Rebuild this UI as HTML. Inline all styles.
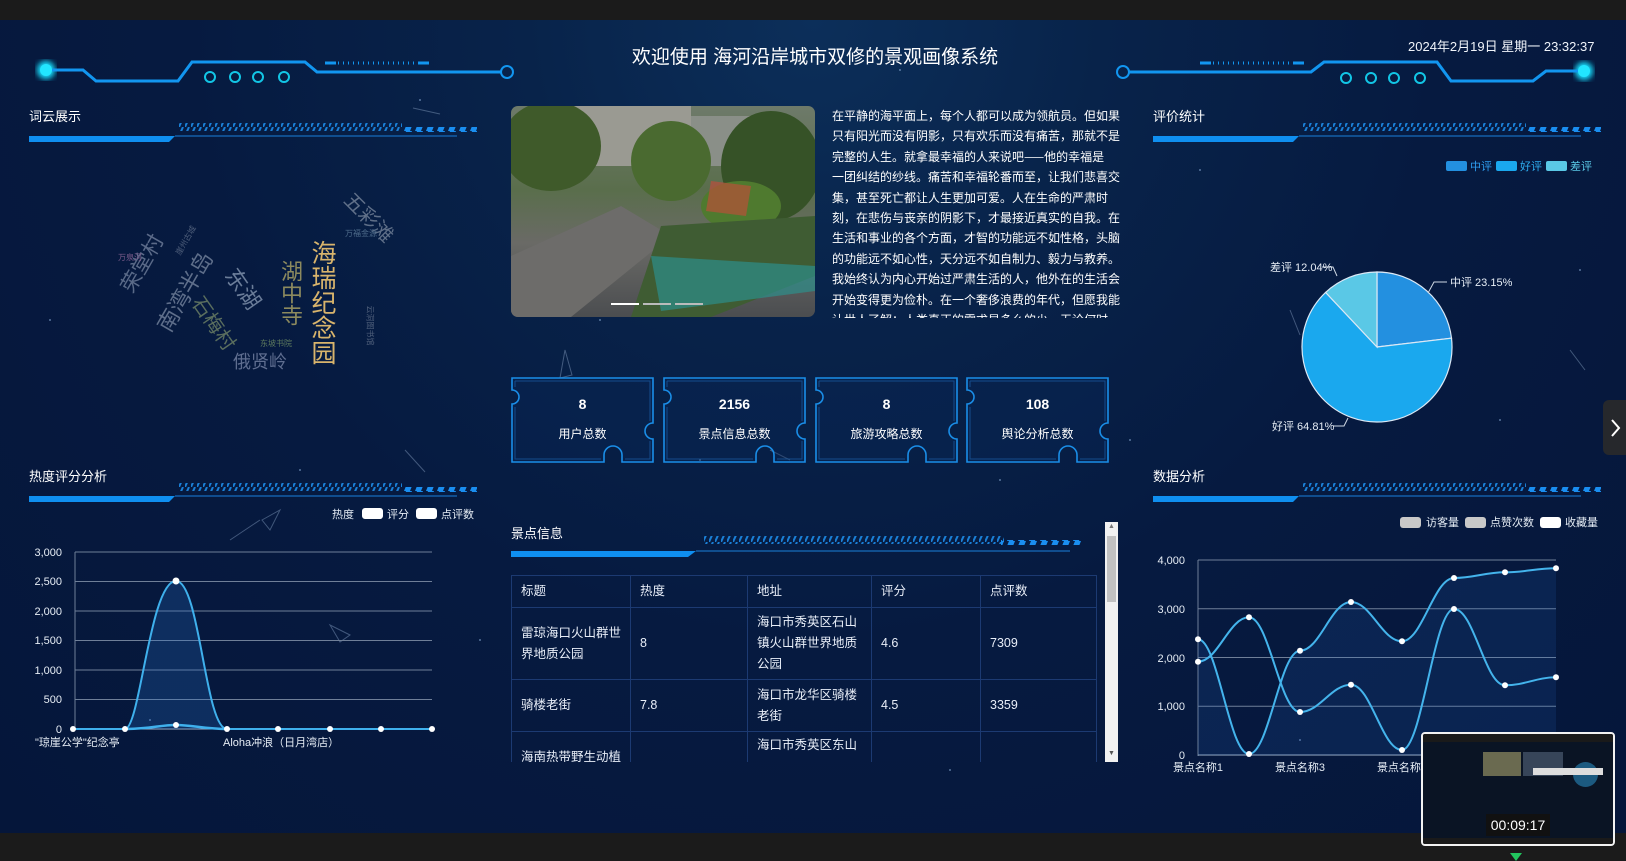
<!DOCTYPE html>
<html><head><meta charset="utf-8">
<style>
*{margin:0;padding:0;box-sizing:border-box}
body{width:1626px;height:861px;overflow:hidden;background:#1b1b1b;font-family:"Liberation Sans","Noto Sans CJK SC",sans-serif;color:#fff;position:relative}
#main{position:absolute;left:0;top:20px;width:1626px;height:813px;background:radial-gradient(ellipse at 50% 0%,#0c2f5a 0%,#08234a 25%,#061a40 55%,#05163a 100%);overflow:hidden}
.abs{position:absolute}
.t{position:absolute;white-space:nowrap}
.wc{position:absolute;white-space:nowrap;font-family:"Noto Sans CJK SC",sans-serif}
table{border-collapse:collapse;font-size:12.5px;font-family:"Liberation Sans","Noto Sans CJK SC",sans-serif}
td{border:1px solid #1c3a72;padding:0 9px;vertical-align:middle;line-height:21px;color:#e8eef8}
</style></head><body>
<div id="main">
<svg class="abs" style="left:0;top:0" width="1626" height="813">
<g fill="#8fb0d8" opacity=".6">
<circle cx="420" cy="80" r="1"/><circle cx="900" cy="50" r="1"/><circle cx="600" cy="300" r="1"/><circle cx="1200" cy="150" r="1"/><circle cx="1500" cy="400" r="1"/><circle cx="300" cy="450" r="1"/><circle cx="700" cy="440" r="1"/><circle cx="1000" cy="460" r="1"/><circle cx="150" cy="700" r="1"/><circle cx="950" cy="750" r="1"/><circle cx="1300" cy="720" r="1"/><circle cx="50" cy="300" r="1"/><circle cx="1580" cy="250" r="1"/><circle cx="480" cy="620" r="1"/><circle cx="1130" cy="420" r="1"/>
</g>
<g stroke="#7d95b8" stroke-width="1" opacity=".5" fill="none">
<path d="M413 88 L440 94"/><path d="M565 330 L572 355 L560 358Z"/><path d="M262 500 L280 490 L270 510Z"/><path d="M330 605 L350 615 L340 622Z"/><path d="M1570 330 L1585 350"/><path d="M1290 290 L1300 315"/><path d="M230 520 L260 500"/><path d="M405 430 L425 452"/><path d="M770 430 L790 440"/>
</g>
</svg>

<svg class="abs" style="left:0;top:0" width="1626" height="120">
<defs><filter id="gl"><feGaussianBlur stdDeviation="3"/></filter></defs>
<circle cx="46" cy="50" r="9" fill="#19e0ff" filter="url(#gl)"/>
<circle cx="46" cy="50" r="6" fill="#22e6ff"/>
<path d="M52 50 H83 L96 61 H178 L192 42 H305 L317 52 H501" stroke="#1296f0" stroke-width="3" fill="none"/>
<circle cx="507" cy="52" r="6" stroke="#1296f0" stroke-width="2" fill="none"/>
<g stroke="#12c6e6" stroke-width="2" fill="none"><circle cx="210" cy="57" r="5"/><circle cx="235" cy="57" r="5"/><circle cx="258" cy="57" r="5"/><circle cx="284" cy="57" r="5"/></g>
<path d="M325 43 H336 M418 43 H429" stroke="#1296f0" stroke-width="3"/>
<path d="M338 43 H416" stroke="#1296f0" stroke-width="3" stroke-dasharray="1 4"/>

<circle cx="1584" cy="51" r="9" fill="#19e0ff" filter="url(#gl)"/>
<circle cx="1584" cy="51" r="6" fill="#22e6ff"/>
<path d="M1578 51 H1546 L1533 61 H1451 L1437 42 H1324 L1311 52 H1129" stroke="#1296f0" stroke-width="3" fill="none"/>
<circle cx="1123" cy="52" r="6" stroke="#1296f0" stroke-width="2" fill="none"/>
<g stroke="#12c6e6" stroke-width="2" fill="none"><circle cx="1346" cy="58" r="5"/><circle cx="1371" cy="58" r="5"/><circle cx="1394" cy="58" r="5"/><circle cx="1420" cy="58" r="5"/></g>
<path d="M1200 43 H1211 M1293 43 H1304" stroke="#1296f0" stroke-width="3"/>
<path d="M1213 43 H1291" stroke="#1296f0" stroke-width="3" stroke-dasharray="1 4"/>
</svg>
<div class="t" style="left:0;width:1630px;text-align:center;top:22px;font-size:19px;">欢迎使用 海河沿岸城市双修的景观画像系统</div>
<div class="t" style="left:1408px;top:16px;font-size:13px;color:#f0f4fa">2024年2月19日 星期一 23:32:37</div>

<svg class="abs" style="left:0;top:0" width="1626" height="813">
<defs>
<pattern id="hatch" width="6" height="9" patternUnits="userSpaceOnUse"><path d="M0 9 L4 0" stroke="#1a7fd6" stroke-width="2"/></pattern>
<pattern id="dsh" width="11" height="5" patternUnits="userSpaceOnUse"><path d="M1 5 L3 0 H9 L7 5Z" fill="#1a8ef0"/></pattern>
<g id="ph">
<path d="M0 0 H146 L140 6 H0Z" fill="#0f8ff0"/>
<path d="M146 0 H428" stroke="#135ea8" stroke-width="1.5"/>
<rect x="150" y="-13" width="223" height="8" fill="url(#hatch)"/>
<rect x="373" y="-9" width="75" height="5" fill="url(#dsh)"/>
</g>
</defs>
<use href="#ph" x="29" y="116"/>
<use href="#ph" x="1153" y="116"/>
<use href="#ph" x="29" y="476"/>
<use href="#ph" x="1153" y="476"/>
<g transform="translate(511,531)">
<path d="M0 0 H185 L177 6 H0Z" fill="#0f8ff0"/>
<path d="M185 0 H559" stroke="#135ea8" stroke-width="1.5"/>
<rect x="193" y="-15" width="300" height="8" fill="url(#hatch)"/>
<rect x="490" y="-11" width="80" height="5" fill="url(#dsh)"/>
</g>
</svg>
<div class="t" style="left:29px;top:86px;font-size:13px">词云展示</div>
<div class="t" style="left:1153px;top:86px;font-size:13px">评价统计</div>
<div class="t" style="left:29px;top:446px;font-size:13px">热度评分分析</div>
<div class="t" style="left:1153px;top:446px;font-size:13px">数据分析</div>
<div class="t" style="left:511px;top:503px;font-size:13px">景点信息</div>

<div class="wc" style="left:311px;top:220px;writing-mode:vertical-rl;font-size:25px;color:#d8b46c;line-height:26px">海瑞纪念园</div>
<div class="wc" style="left:280px;top:240px;writing-mode:vertical-rl;font-size:22px;color:#8c8a5e;line-height:23px">湖中寺</div>
<div class="wc" style="left:340px;top:182px;font-size:20px;color:#5f6f88;transform:rotate(45deg)">五彩滩</div>
<div class="wc" style="left:222px;top:252px;font-size:22px;color:#6b7d99;transform:rotate(55deg)">东湖</div>
<div class="wc" style="left:185px;top:288px;font-size:20px;color:#5a6e5e;transform:rotate(55deg)">石梅村</div>
<div class="wc" style="left:140px;top:255px;font-size:22px;color:#5e6e8a;transform:rotate(-60deg)">南湾半岛</div>
<div class="wc" style="left:110px;top:228px;font-size:21px;color:#5a6a88;transform:rotate(-60deg)">荣堂村</div>
<div class="wc" style="left:233px;top:328px;font-size:18px;color:#5f6e90">俄贤岭</div>
<div class="wc" style="left:345px;top:208px;font-size:8px;color:#4e6b8a">万福金源</div>
<div class="wc" style="left:260px;top:318px;font-size:8px;color:#5d7a5d">东坡书院</div>
<div class="wc" style="left:118px;top:232px;font-size:8px;color:#7a5a8a">万泉河</div>
<div class="wc" style="left:170px;top:215px;font-size:8px;color:#4e5e7a;transform:rotate(-60deg)">崖州古城</div>
<div class="wc" style="left:350px;top:300px;font-size:8px;color:#4e5e7a;transform:rotate(90deg)">云洞图书馆</div>

<div class="abs" style="left:511px;top:86px;width:304px;height:211px;border-radius:7px;overflow:hidden;background:linear-gradient(180deg,#6e7a6a 0%,#5a6e4c 40%,#6a6a66 65%,#4b4d50 100%)">
<svg width="304" height="211">
<rect x="60" y="0" width="120" height="60" fill="#9a9a92"/>
<rect x="180" y="10" width="80" height="50" fill="#8a8f88"/>
<ellipse cx="40" cy="40" rx="50" ry="45" fill="#3f5a2a"/>
<ellipse cx="160" cy="55" rx="40" ry="40" fill="#4a6a30"/>
<ellipse cx="260" cy="60" rx="50" ry="55" fill="#365227"/>
<ellipse cx="230" cy="100" rx="40" ry="25" fill="#4f7a2f"/>
<path d="M0 150 L110 100 L160 130 L60 211 H0Z" fill="#6d6c6a"/>
<path d="M150 120 L304 110 V170 L200 211 H120Z" fill="#3f5c33"/>
<path d="M140 150 L304 160 V185 L150 205Z" fill="#2e8f8a" opacity=".7"/>
<path d="M200 75 L240 80 L235 110 L195 105Z" fill="#c94a3a" opacity=".6"/>
<rect x="100" y="197" width="28" height="2" fill="#fff"/><rect x="132" y="197" width="28" height="2" fill="#bbb"/><rect x="164" y="197" width="28" height="2" fill="#bbb"/>
</svg></div>

<div class="abs" style="left:832px;top:86px;width:300px;height:212px;overflow:hidden;font-size:12px;line-height:20.4px;color:#fff;font-family:'Noto Sans CJK SC',sans-serif">
<div>在平静的海平面上，每个人都可以成为领航员。但如果</div>
<div>只有阳光而没有阴影，只有欢乐而没有痛苦，那就不是</div>
<div>完整的人生。就拿最幸福的人来说吧——他的幸福是</div>
<div>一团纠结的纱线。痛苦和幸福轮番而至，让我们悲喜交</div>
<div>集，甚至死亡都让人生更加可爱。人在生命的严肃时</div>
<div>刻，在悲伤与丧亲的阴影下，才最接近真实的自我。在</div>
<div>生活和事业的各个方面，才智的功能远不如性格，头脑</div>
<div>的功能远不如心性，天分远不如自制力、毅力与教养。</div>
<div>我始终认为内心开始过严肃生活的人，他外在的生活会</div>
<div>开始变得更为俭朴。在一个奢侈浪费的年代，但愿我能</div>
<div>让世人了解：人类真正的需求是多么的少。无论何时</div>
</div>

<svg class="abs" style="left:0;top:0" width="1626" height="813">
<defs>
<g id="card">
<path d="M1 1 H142 V46 A8 8 0 0 0 142 62 V85 H111 V78 A9 9 0 0 0 93 78 V85 H1 V27 A7 7 0 0 0 1 13Z" fill="rgba(10,40,90,.35)" stroke="#1a8ee8" stroke-width="1.6"/>
<path d="M4 4 H139 V44 M139 64 V82 H114 M90 82 H4 V30 M4 10 V4" fill="none" stroke="#1a5ea8" stroke-width="1" opacity=".7"/>
</g></defs>
<use href="#card" x="511" y="357"/><use href="#card" x="663" y="357"/><use href="#card" x="815" y="357"/><use href="#card" x="966" y="357"/>
</svg>
<div class="t" style="left:511px;width:143px;text-align:center;top:376px;font-size:14px;font-weight:bold">8</div>
<div class="t" style="left:663px;width:143px;text-align:center;top:376px;font-size:14px;font-weight:bold">2156</div>
<div class="t" style="left:815px;width:143px;text-align:center;top:376px;font-size:14px;font-weight:bold">8</div>
<div class="t" style="left:966px;width:143px;text-align:center;top:376px;font-size:14px;font-weight:bold">108</div>
<div class="t" style="left:511px;width:143px;text-align:center;top:405px;font-size:12px">用户总数</div>
<div class="t" style="left:663px;width:143px;text-align:center;top:405px;font-size:12px">景点信息总数</div>
<div class="t" style="left:815px;width:143px;text-align:center;top:405px;font-size:12px">旅游攻略总数</div>
<div class="t" style="left:966px;width:143px;text-align:center;top:405px;font-size:12px">舆论分析总数</div>

<div class="abs" style="left:511px;top:555px;width:586px;height:187px;overflow:hidden">
<table style="width:586px">
<tr style="height:32px"><td style="width:119px">标题</td><td style="width:117px">热度</td><td style="width:124px">地址</td><td style="width:109px">评分</td><td>点评数</td></tr>
<tr style="height:72px"><td>雷琼海口火山群世界地质公园</td><td>8</td><td>海口市秀英区石山镇火山群世界地质公园</td><td>4.6</td><td>7309</td></tr>
<tr style="height:52px"><td>骑楼老街</td><td>7.8</td><td>海口市龙华区骑楼老街</td><td>4.5</td><td>3359</td></tr>
<tr style="height:60px"><td style="vertical-align:top;padding-top:15px">海南热带野生动植</td><td></td><td style="vertical-align:top;padding-top:3px">海口市秀英区东山</td><td></td><td></td></tr>
</table></div>
<div class="abs" style="left:1105px;top:502px;width:13px;height:240px;background:#f1f1f1">
<div class="abs" style="left:2px;top:14px;width:9px;height:66px;background:#c1c1c1"></div>
<div class="t" style="left:3px;top:1px;font-size:7px;color:#777">▲</div>
<div class="t" style="left:3px;top:228px;font-size:7px;color:#555">▼</div>
</div>

<svg class="abs" style="left:0;top:0" width="1626" height="813">
<g stroke="#dbe8f5" stroke-width="1.2">
<path d="M1377 327 L1377 252 A75 75 0 0 1 1451.5 318.2Z" fill="#2390e0"/>
<path d="M1377 327 L1451.5 318.2 A75 75 0 1 1 1325.6 272.4Z" fill="#1aa8ee"/>
<path d="M1377 327 L1325.6 272.4 A75 75 0 0 1 1377 252Z" fill="#5ac8e6"/>
</g>
<g stroke="#cfd8e4" fill="none" stroke-width="1">
<path d="M1428 273 L1434 262 H1447"/><path d="M1337 256 L1333 247 H1322"/><path d="M1348 398 L1344 406 H1333"/>
</g>
<rect x="1446" y="141" width="21" height="10" rx="2" fill="#2390e0"/>
<rect x="1496" y="141" width="21" height="10" rx="2" fill="#1aa8ee"/>
<rect x="1546" y="141" width="21" height="10" rx="2" fill="#5ac8e6"/>
<g font-size="11" font-family="Liberation Sans,Noto Sans CJK SC,sans-serif">
<text x="1470" y="150" fill="#2e9ef0">中评</text><text x="1520" y="150" fill="#2eaef0">好评</text><text x="1570" y="150" fill="#5ac8e6">差评</text>
<text x="1450" y="266" fill="#e6edf5">中评 23.15%</text>
<text x="1270" y="251" fill="#e6edf5">差评 12.04%</text>
<text x="1272" y="410" fill="#e6edf5">好评 64.81%</text>
</g>
</svg>

<svg class="abs" style="left:0;top:0" width="1626" height="813">
<g stroke="#6f7f98" stroke-width="1">
<path d="M75 532 H432 M75 561.5 H432 M75 591 H432 M75 620.5 H432 M75 650 H432 M75 679.5 H432"/>
<path d="M75 532 V710"/>
</g>
<path d="M75 709 H432" stroke="#9db0c8" stroke-width="1"/>
<g font-size="11" fill="#e6edf5" text-anchor="end" font-family="Liberation Sans,sans-serif">
<text x="62" y="536">3,000</text><text x="62" y="565">2,500</text><text x="62" y="595">2,000</text><text x="62" y="624">1,500</text><text x="62" y="654">1,000</text><text x="62" y="683">500</text><text x="62" y="713">0</text>
</g>
<path d="M125 709 C140 709 150 561 176 561 C200 561 205 709 227 709Z" fill="rgba(40,110,200,.25)"/>
<path d="M73 709 H125 C140 709 150 561 176 561 C200 561 205 709 227 709 H432" stroke="#3fb0ec" stroke-width="2" fill="none"/>
<path d="M125 709 C150 709 160 705 176 705 C192 705 205 709 227 709" stroke="#3fb0ec" stroke-width="2.5" fill="none"/>
<g fill="#fff"><circle cx="73" cy="709" r="3"/><circle cx="125" cy="709" r="3"/><circle cx="176" cy="561" r="3.5"/><circle cx="176" cy="705" r="3"/><circle cx="227" cy="709" r="3"/><circle cx="278" cy="709" r="3"/><circle cx="330" cy="709" r="3"/><circle cx="381" cy="709" r="3"/><circle cx="432" cy="709" r="3"/></g>
<g font-size="11" fill="#e6edf5" font-family="Liberation Sans,Noto Sans CJK SC,sans-serif">
<text x="35" y="726">"琼崖公学"纪念亭</text><text x="223" y="726">Aloha冲浪（日月湾店）</text>
<text x="332" y="498">热度</text><text x="387" y="498">评分</text><text x="441" y="498">点评数</text>
</g>
<rect x="362" y="488" width="21" height="11" rx="3" fill="#fff"/><rect x="416" y="488" width="21" height="11" rx="3" fill="#fff"/>

<g stroke="#6f7f98" stroke-width="1">
<path d="M1198 540 H1556 M1198 588.75 H1556 M1198 637.5 H1556 M1198 686.25 H1556 M1198 540 V736"/>
</g>
<path d="M1198 735 H1556" stroke="#9db0c8"/>
<g font-size="11" fill="#e6edf5" text-anchor="end" font-family="Liberation Sans,sans-serif">
<text x="1185" y="544">4,000</text><text x="1185" y="593">3,000</text><text x="1185" y="642">2,000</text><text x="1185" y="690">1,000</text><text x="1185" y="739">0</text>
</g>
<path d="M1198 619.3 C1218 619.3 1229 734 1249 734 C1269 734 1280 630.7 1300 630.7 C1320 630.7 1331 582 1351 582 C1371 582 1382 621.3 1402 621.3 C1422 621.3 1434 558 1454 558 C1474 558 1485 552.3 1505 552.3 C1525 552.3 1536 548.3 1556 548.3 V735 H1198Z" fill="rgba(40,110,200,.15)"/>
<g stroke="#44b4ec" stroke-width="2" fill="none">
<path d="M1198 619.3 C1218 619.3 1229 734 1249 734 C1269 734 1280 630.7 1300 630.7 C1320 630.7 1331 582 1351 582 C1371 582 1382 621.3 1402 621.3 C1422 621.3 1434 558 1454 558 C1474 558 1485 552.3 1505 552.3 C1525 552.3 1536 548.3 1556 548.3"/>
<path d="M1198 641.7 C1218 641.7 1229 597.3 1249 597.3 C1269 597.3 1280 692 1300 692 C1320 692 1331 664.7 1351 664.7 C1371 664.7 1382 730 1402 730 C1422 730 1434 589 1454 589 C1474 589 1485 665.3 1505 665.3 C1525 665.3 1536 657.3 1556 657.3"/>
</g>
<g fill="#fff">
<circle cx="1198" cy="619.3" r="3"/><circle cx="1249" cy="734" r="3"/><circle cx="1300" cy="630.7" r="3"/><circle cx="1351" cy="582" r="3"/><circle cx="1402" cy="621.3" r="3"/><circle cx="1454" cy="558" r="3"/><circle cx="1505" cy="552.3" r="3"/><circle cx="1556" cy="548.3" r="3"/>
<circle cx="1198" cy="641.7" r="3"/><circle cx="1249" cy="597.3" r="3"/><circle cx="1300" cy="692" r="3"/><circle cx="1351" cy="664.7" r="3"/><circle cx="1402" cy="730" r="3"/><circle cx="1454" cy="589" r="3"/><circle cx="1505" cy="665.3" r="3"/><circle cx="1556" cy="657.3" r="3"/>
</g>
<rect x="1400" y="497" width="21" height="11" rx="3" fill="#c8c8c8"/><rect x="1465" y="497" width="21" height="11" rx="3" fill="#c8c8c8"/><rect x="1540" y="497" width="21" height="11" rx="3" fill="#fff"/>
<g font-size="11" fill="#e6edf5" font-family="Liberation Sans,Noto Sans CJK SC,sans-serif">
<text x="1426" y="506">访客量</text><text x="1490" y="506">点赞次数</text><text x="1565" y="506">收藏量</text>
<text x="1198" y="751" text-anchor="middle">景点名称1</text><text x="1300" y="751" text-anchor="middle">景点名称3</text><text x="1402" y="751" text-anchor="middle">景点名称5</text>
</g>
</svg>
</div>

<div class="abs" style="left:1603px;top:400px;width:23px;height:55px;background:#26282c;border-radius:6px 0 0 6px"></div>
<svg class="abs" style="left:1610px;top:418px" width="12" height="20"><path d="M2 2 L9 10 L2 18" stroke="#fff" stroke-width="2" fill="none"/></svg>

<div class="abs" style="left:1421px;top:732px;width:194px;height:114px;border:2px solid #f2f2f2;border-radius:4px;background:#0a1424;overflow:hidden">
<div class="abs" style="left:0;top:0;width:190px;height:8px;background:#1a1a1a"></div>
<div class="abs" style="left:60px;top:18px;width:38px;height:24px;background:#6a6a50"></div>
<div class="abs" style="left:100px;top:18px;width:40px;height:24px;background:#4a5a70;opacity:.7"></div>
<div class="abs" style="left:150px;top:28px;width:25px;height:25px;border-radius:50%;background:#1c5a80"></div>
<div class="abs" style="left:110px;top:34px;width:70px;height:7px;background:#ddd"></div>
<div class="abs" style="left:0;top:104px;width:190px;height:8px;background:#1a1a1a"></div>
<div class="t" style="left:63px;top:80px;width:64px;text-align:center;background:#111;font-size:14px;line-height:22px;color:#fff">00:09:17</div>
</div>
<svg class="abs" style="left:1510px;top:853px" width="12" height="8"><path d="M0 0 H12 L6 8Z" fill="#22c55e"/></svg>
</body></html>
